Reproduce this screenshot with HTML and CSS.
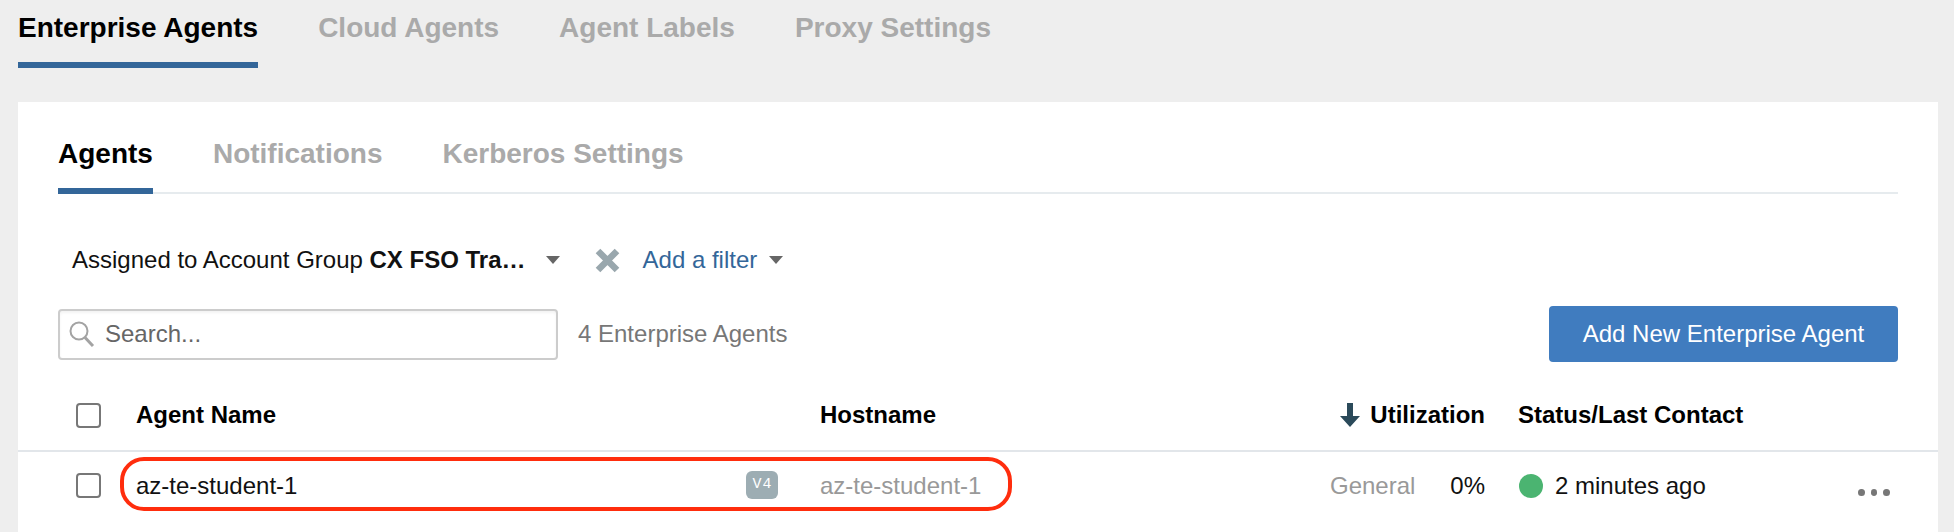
FILE: index.html
```html
<!DOCTYPE html>
<html lang="en">
<head>
<meta charset="utf-8">
<title>Enterprise Agents</title>
<link rel="stylesheet" href="styles.css">
</head>
<body>
<nav class="main-tabs">
  <a class="main-tab is-active">Enterprise Agents</a>
  <a class="main-tab">Cloud Agents</a>
  <a class="main-tab">Agent Labels</a>
  <a class="main-tab">Proxy Settings</a>
</nav>
<main class="card">
  <div class="card-head">
    <nav class="sub-tabs">
      <a class="sub-tab is-active">Agents</a>
      <a class="sub-tab">Notifications</a>
      <a class="sub-tab">Kerberos Settings</a>
    </nav>
    <div class="filters">
      <span class="filter-text">Assigned to Account Group <b>CX FSO Tra…</b></span>
      <span class="caret caret-first"></span>
      <svg class="clear-icon" width="25" height="25" viewBox="0 0 25 25"><path d="M3 3 L22 22 M22 3 L3 22" stroke="#99a7ad" stroke-width="6.5"/></svg>
      <span class="filter-link">Add a filter</span>
      <span class="caret caret-last"></span>
    </div>
    <div class="toolbar">
      <div class="search">
        <svg class="search-icon" width="28" height="30" viewBox="0 0 28 30"><circle cx="11" cy="12" r="8.5" fill="none" stroke="#a3a3a3" stroke-width="2"/><path d="M17 18.5 L25 27" stroke="#a3a3a3" stroke-width="3"/></svg>
        <span class="search-placeholder">Search...</span>
      </div>
      <span class="count">4 Enterprise Agents</span>
      <button class="add-button">Add New Enterprise Agent</button>
    </div>
  </div>
  <div class="table-row table-header">
    <span class="checkbox"></span>
    <span>Agent Name</span>
    <span>Hostname</span>
    <span class="util-head">
      <svg width="20" height="24" viewBox="0 0 20 24"><path d="M7 0 H13 V13 H20 L10 24 L0 13 H7 Z" fill="#2b4a5a"/></svg>
      Utilization
    </span>
    <span>Status/Last Contact</span>
    <span></span>
  </div>
  <div class="table-row table-body">
    <span class="checkbox"></span>
    <span class="agent-name">az-te-student-1<span class="badge">V4</span></span>
    <span class="muted host-cell">az-te-student-1</span>
    <span class="util-cell"><span class="muted">General</span><span>0%</span></span>
    <span class="status"><span class="dot"></span>2 minutes ago</span>
    <span class="more"><i></i><i></i><i></i></span>
    <div class="highlight"></div>
  </div>
</main>
</body>
</html>
```

FILE: styles.css
```css
* { box-sizing: border-box; }
html, body { height: 100%; }
body {
  margin: 0;
  padding: 0 16px 0 18px;
  background: #eeeeee;
  font-family: "Liberation Sans", Arial, sans-serif;
  font-size: 24px;
  color: #111;
  overflow: hidden;
  display: flex;
  flex-direction: column;
}
.main-tabs { display: flex; gap: 60px; height: 68px; flex: none; }
.main-tab {
  height: 68px;
  line-height: 56px;
  font-size: 28px;
  font-weight: 700;
  color: #aaaaaa;
  white-space: nowrap;
}
.main-tab.is-active { color: #000; border-bottom: 6px solid #336699; }
.card {
  flex: 1;
  margin-top: 34px;
  background: #fff;
  padding-top: 26px;
}
.card-head { padding: 0 40px; }
.sub-tabs {
  display: flex;
  gap: 60px;
  height: 66px;
  border-bottom: 2px solid #e6ebee;
}
.sub-tab {
  height: 66px;
  line-height: 52px;
  font-size: 28px;
  font-weight: 700;
  color: #aaaaaa;
  white-space: nowrap;
}
.sub-tab.is-active { color: #000; border-bottom: 6px solid #336699; }
.filters {
  display: flex;
  align-items: center;
  height: 30px;
  margin-top: 51px;
  padding-left: 14px;
  white-space: nowrap;
}
.caret {
  width: 0;
  height: 0;
  border-left: 7.5px solid transparent;
  border-right: 7.5px solid transparent;
  border-top: 8px solid #666;
}
.caret-first { margin-left: 20px; }
.clear-icon { margin-left: 35px; }
.filter-link { margin-left: 23px; color: #336699; }
.caret-last { margin-left: 12px; }
.toolbar {
  display: flex;
  align-items: center;
  height: 56px;
  margin-top: 31px;
}
.search {
  display: flex;
  align-items: center;
  width: 500px;
  height: 51px;
  padding-left: 8px;
  border: 2px solid #cccccc;
  border-radius: 4px;
  box-shadow: inset 0 2px 3px rgba(0, 0, 0, 0.05);
}
.search-placeholder { margin-left: 9px; color: #666; }
.count { margin-left: 20px; color: #777; }
.add-button {
  margin-left: auto;
  width: 349px;
  height: 56px;
  border: 0;
  border-radius: 4px;
  background: #407cbf;
  color: #fff;
  font: inherit;
}
.table-row {
  position: relative;
  display: grid;
  grid-template-columns: 60px 684px 490px 175px 373px 32px;
  align-items: center;
  padding-left: 58px;
}
.table-header {
  height: 72px;
  margin-top: 18px;
  border-bottom: 2px solid #e2e6ea;
  font-weight: 700;
  color: #000;
}
.table-body { height: 66px; }
.table-row > :nth-child(5) { margin-left: 33px; }
.table-body > :nth-child(5) { margin-left: 34px; }
.agent-name, .host-cell, .util-cell, .status { padding-top: 2px; }
.checkbox {
  display: block;
  width: 25px;
  height: 25px;
  border: 2px solid #777;
  border-radius: 4px;
}
.util-head { display: flex; align-items: center; justify-content: flex-end; gap: 10px; }
.agent-name { display: flex; align-items: center; justify-content: space-between; padding-right: 42px; }
.badge {
  width: 32px;
  height: 28px;
  margin-top: -2px;
  border-radius: 6px;
  background: #9dadb3;
  color: #fff;
  font-family: "Liberation Mono", monospace;
  font-size: 15px;
  line-height: 27px;
  text-align: center;
  letter-spacing: 1px;
  text-indent: 1px;
}
.muted { color: #999; }
.util-cell { display: flex; justify-content: space-between; padding-left: 20px; }
.status { display: flex; align-items: center; gap: 12px; }
.dot { width: 24px; height: 24px; border-radius: 50%; background: #4bb471; }
.more { display: flex; gap: 6px; padding-top: 14px; }
.more i { width: 7px; height: 7px; border-radius: 50%; background: #777; }
.highlight {
  position: absolute;
  left: 102px;
  top: 5px;
  width: 892px;
  height: 54px;
  border: 4.5px solid #ff2d0d;
  border-radius: 24px;
  pointer-events: none;
}
```
